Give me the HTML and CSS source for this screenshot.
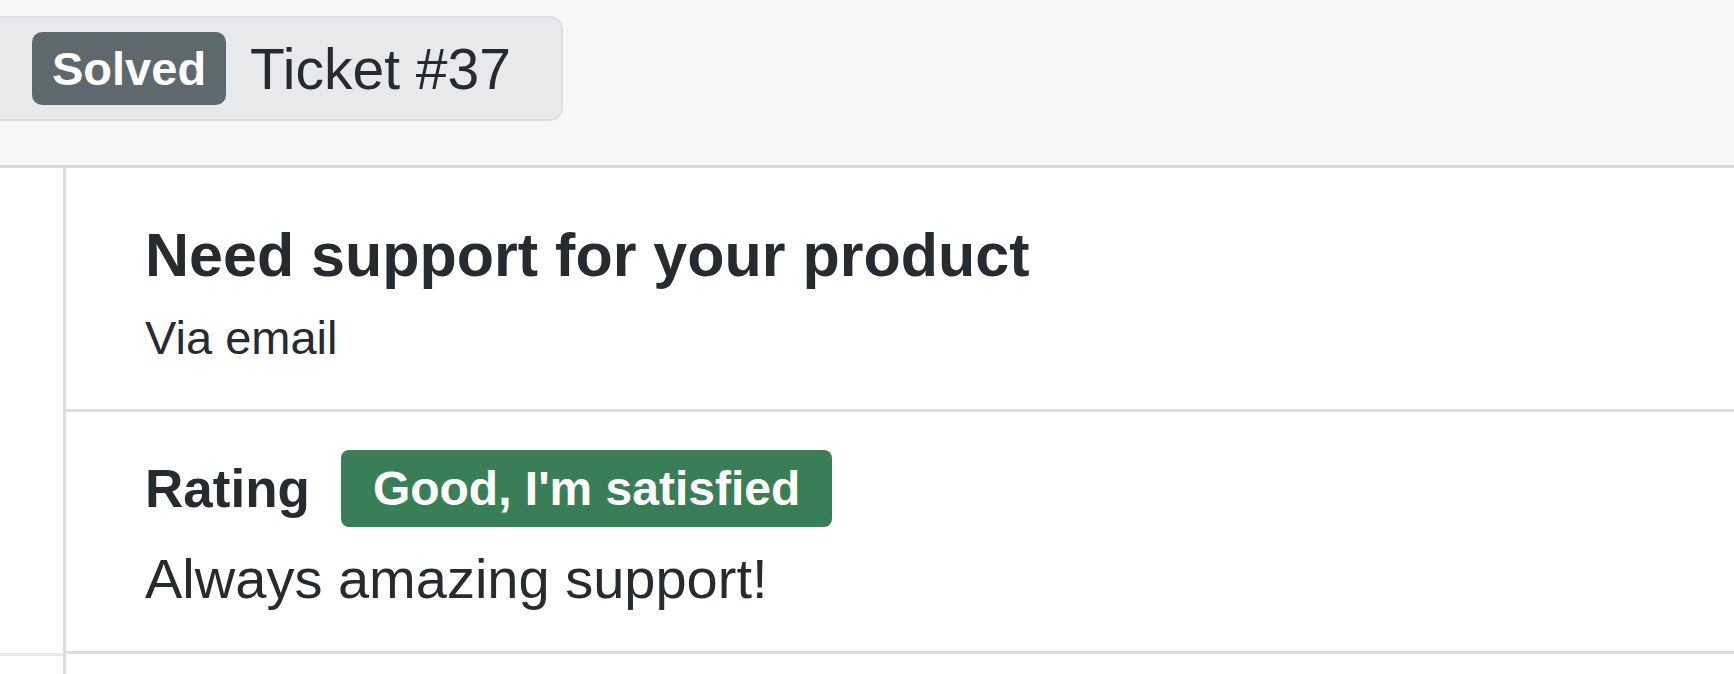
FILE: index.html
```html
<!DOCTYPE html>
<html lang="en">
<head>
	<meta charset="UTF-8">
	<title>Ticket #37</title>
	<link rel="stylesheet" href="styles.css">
</head>
<body>
	<div class="header">
		<div class="ticket">
			<span class="badge badge-solved">Solved</span>
			<span class="ticket-title">Ticket #37</span>
		</div>
	</div>
	<div class="main">
		<div class="rail">
			<div class="rail-row"></div>
		</div>
		<div class="content">
			<div class="section section-subject">
				<h2 class="subject">Need support for your product</h2>
				<p class="channel">Via email</p>
			</div>
			<div class="section section-rating">
				<div class="rating-row">
					<span class="rating-label">Rating</span>
					<span class="badge badge-good">Good, I'm satisfied</span>
				</div>
				<p class="comment">Always amazing support!</p>
			</div>
			<div class="section section-empty"></div>
		</div>
	</div>
</body>
</html>
```

FILE: styles.css
```css
html, body {
	margin: 0;
	padding: 0;
	background: #fff;
}
body {
	font-family: "Liberation Sans", Arial, sans-serif;
	color: #262b30;
	overflow: hidden;
}
.header {
	height: 149px;
	padding-top: 16px;
	background: #f6f8f8;
	border-bottom: 3px solid #d9dde1;
}
.ticket {
	display: inline-flex;
	align-items: center;
	margin-left: -20px;
	padding: 14px 50px 14px 50px;
	border: 2px solid #dcdfe2;
	border-radius: 13px;
	background: #e8e9eb;
}
.badge {
	display: inline-flex;
	align-items: center;
	font-weight: bold;
	color: #fff;
	white-space: nowrap;
}
.badge-solved {
	height: 73px;
	padding: 0 20px;
	font-size: 47px;
	border-radius: 10px;
	background: #5e696f;
}
.ticket-title {
	margin-left: 24px;
	font-size: 57px;
	white-space: nowrap;
}
.main {
	display: flex;
	min-height: 506px;
}
.rail {
	width: 63px;
	flex-shrink: 0;
	border-right: 3px solid #d9dde1;
}
.rail-row {
	height: 485px;
	border-bottom: 3px solid #e6e8ea;
}
.content {
	flex: 1;
}
.section {
	padding-left: 79px;
	border-bottom: 3px solid #d9dde1;
}
.section-subject {
	padding-top: 57px;
	padding-bottom: 48px;
}
.subject {
	margin: 0;
	font-size: 61px;
	line-height: 1;
	font-weight: bold;
}
.channel {
	margin: 28px 0 0;
	font-size: 47px;
	line-height: 1;
}
.section-rating {
	padding-top: 38px;
	padding-bottom: 44px;
}
.rating-row {
	display: flex;
	align-items: center;
	gap: 31px;
}
.rating-label {
	font-size: 53px;
	font-weight: bold;
}
.badge-good {
	height: 77px;
	padding: 0 32px;
	font-size: 48px;
	border-radius: 8px;
	background: #3a7e57;
}
.comment {
	margin: 24px 0 0;
	font-size: 56px;
	line-height: 1;
}
.section-empty {
	height: 18px;
	border-bottom: 0;
}
```
